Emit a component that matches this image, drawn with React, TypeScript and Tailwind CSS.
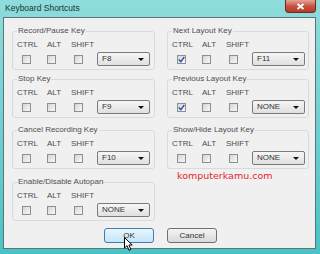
import React from "react";

type GroupProps = {
  title: string;
  value: string;
  ctrl?: boolean;
  className?: string;
};

const CheckBox = ({ checked, className = "" }: { checked?: boolean; className?: string }) => (
  <span
    className={`flex h-[9px] w-[9px] items-center justify-center border border-[#8e8f8f] bg-gradient-to-br from-[#d6d6d6] to-[#f8f8f8] ${className}`}
  >
    {checked && (
      <svg width="7" height="7" viewBox="0 0 7 7">
        <path d="M0.8 3.6 L2.8 5.6 L6.3 1" fill="none" stroke="#2b4fae" strokeWidth="1.4" />
      </svg>
    )}
  </span>
);

const Dropdown = ({ value }: { value: string }) => (
  <div className="flex h-[14px] w-[53px] items-center justify-between rounded-[2px] border border-[#7b7b7b] bg-gradient-to-b from-[#f6f6f6] to-[#e0e0e0] pl-[4px] pr-[5px] text-[8px] leading-none text-[#333]">
    <span>{value}</span>
    <span className="h-0 w-0 border-x-[3px] border-t-[3px] border-x-transparent border-t-[#111]" />
  </div>
);

const KeyGroup = ({ title, value, ctrl, className = "" }: GroupProps) => (
  <div className={`relative h-[39px] rounded-[3px] border border-[#d5dce1] pl-[4px] pt-[8px] ${className}`}>
    <span className="absolute left-[4px] top-[-6px] bg-[#f0f0f0] px-[1px] text-[8px] leading-[10px] text-[#4e4e4e]">
      {title}
    </span>
    <div className="grid grid-cols-[30px_24px_26px_53px] grid-rows-[10px_14px] gap-y-[2px] text-[8px] leading-[10px] text-[#4e4e4e]">
      <span>CTRL</span>
      <span>ALT</span>
      <span>SHIFT</span>
      <span />
      <div className="flex items-center pl-[5px]">
        <CheckBox checked={ctrl} />
      </div>
      <div className="flex items-center">
        <CheckBox />
      </div>
      <div className="flex items-center pl-[3px]">
        <CheckBox />
      </div>
      <Dropdown value={value} />
    </div>
  </div>
);

export default function App() {
  return (
    <div className="flex h-[254px] w-[320px] flex-col overflow-hidden bg-gradient-to-b from-[#8fdcdc] to-[#48c3c5] font-['Liberation_Sans',Arial,sans-serif]">
      <div className="flex h-[17px] items-start justify-between">
        <span className="pl-[5px] pt-[3px] text-[8.5px] leading-[10px] text-[#1c3534]">Keyboard Shortcuts</span>
        <div className="mr-[4px] flex h-[13px] w-[31px] items-center justify-center rounded-b-[4px] border border-t-0 border-[#6e2a22] bg-gradient-to-b from-[#e2a597] via-[#c95444] to-[#b8382a]">
          <svg width="9" height="7" viewBox="0 0 9 7">
            <path d="M1.5 1 L7.5 6 M7.5 1 L1.5 6" stroke="#fff" strokeWidth="1.8" />
          </svg>
        </div>
      </div>

      <div className="relative ml-[3px] h-[232px] w-[313px] border border-[#5d7377] bg-[#f0f0f0]">
        <div className="flex gap-[12px] pl-[8px] pt-[13px]">
          <div className="flex w-[143px] flex-col">
            <KeyGroup title="Record/Pause Key" value="F8" />
            <KeyGroup title="Stop Key" value="F9" className="mt-[9px]" />
            <KeyGroup title="Cancel Recording Key" value="F10" className="mt-[12px]" />
            <KeyGroup title="Enable/Disable Autopan" value="NONE" className="mt-[13px]" />
          </div>
          <div className="flex w-[142px] flex-col">
            <KeyGroup title="Next Layout Key" value="F11" ctrl />
            <KeyGroup title="Previous Layout Key" value="NONE" ctrl className="mt-[9px]" />
            <KeyGroup title="Show/Hide Layout Key" value="NONE" className="mt-[12px]" />
            <span className="ml-[10px] mt-[1px] font-['DejaVu_Sans',sans-serif] text-[9.5px] leading-[12px] text-[#e3262c]">
              komputerkamu.com
            </span>
          </div>
        </div>

        <div className="mt-[7px] flex gap-[13px] pl-[100px] text-[8px] text-[#333]">
          <button className="flex h-[15px] w-[50px] items-center justify-center rounded-[3px] border border-[#3c7fb1] bg-gradient-to-b from-[#eaf6fd] to-[#c4e5f8]">
            OK
          </button>
          <button className="flex h-[15px] w-[50px] items-center justify-center rounded-[3px] border border-[#707070] bg-gradient-to-b from-[#f4f4f4] to-[#d9d9d9]">
            Cancel
          </button>
        </div>

        <svg className="absolute left-[120px] top-[219px]" width="10" height="15" viewBox="0 0 10 15">
          <path d="M0.5 0.5 L0.5 11 L3 8.7 L5 13.3 L6.9 12.5 L4.9 8 L8.2 8 Z" fill="#fff" stroke="#000" strokeWidth="1" />
        </svg>
      </div>
    </div>
  );
}
